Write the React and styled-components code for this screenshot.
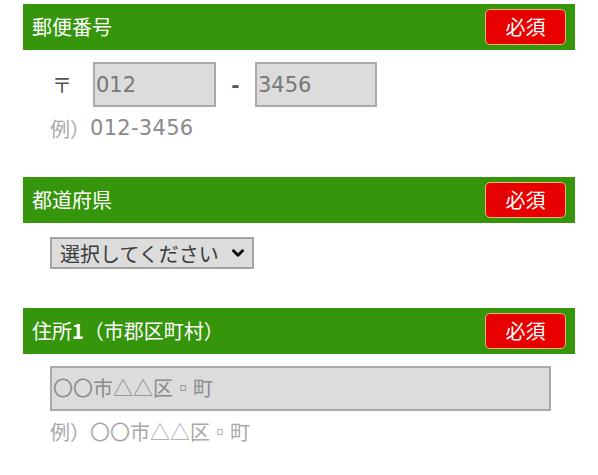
import React from "react";
import styled, { createGlobalStyle } from "styled-components";
import { ChevronDown } from "lucide-react";

/**
 * ______________________________
 * | 郵便番号            [必須] |
 * '''''''''''''''''''''''''''''''
 *    〒 [   ] - [   ]
 *    例）012-3456
 */

const GlobalStyle = createGlobalStyle`
  body {
    margin: 0;
    background: #ffffff;
    font-family: "Noto Sans CJK JP", "Noto Sans", sans-serif;
  }
`;

const Page = styled.div`
  padding: 4px 23px 0 23px;
  width: 552px;
`;

const Section = styled.section`
  margin-bottom: ${(p) => p.gap || 0}px;
`;

const Header = styled.div`
  height: 46px;
  display: flex;
  flex-direction: row;
  align-items: center;
  justify-content: space-between;
  padding: 0 9px;
  background: #35950b;
  box-sizing: border-box;
`;

const Title = styled.span`
  color: #ffffff;
  font-size: 20px;
  line-height: 1;
`;

const Num = styled.span`
  font-weight: 700;
`;

const Badge = styled.span`
  width: 81px;
  height: 36px;
  box-sizing: border-box;
  display: flex;
  align-items: center;
  justify-content: center;
  background: #e80000;
  border: 1px solid #e9b27a;
  border-radius: 5px;
  color: #ffffff;
  font-size: 20px;
  line-height: 1;
`;

const Body = styled.div`
  padding: ${(p) => p.top || 12}px 0 0 27px;
`;

const Row = styled.div`
  display: flex;
  flex-direction: row;
  align-items: center;
`;

const PostMark = styled.span`
  width: 41px;
  padding-left: 2px;
  font-size: 20px;
  color: #555555;
`;

const Dash = styled.span`
  width: 39px;
  text-align: center;
  font-family: "DejaVu Sans", sans-serif;
  font-size: 20px;
  font-weight: 700;
  color: #555555;
`;

const TextBox = styled.input`
  width: ${(p) => p.w}px;
  height: 45px;
  box-sizing: border-box;
  margin: 0;
  padding: 0 1px;
  background: #dcdcdc;
  border: 2px solid #a9a9a9;
  border-radius: 0;
  outline: none;
  font-family: "DejaVu Sans", "Noto Sans CJK JP", sans-serif;
  font-size: 21px;
  color: #777777;

  &::placeholder {
    font-family: "Noto Sans CJK JP", sans-serif;
    font-size: 20px;
    color: #8a8a8a;
    opacity: 1;
  }
`;

const Example = styled.div`
  margin-top: ${(p) => p.top || 6}px;
  height: 30px;
  display: flex;
  align-items: center;
  font-size: 20px;
  color: #a8a8a8;
`;

const ExampleValue = styled.span`
  font-family: "DejaVu Sans", sans-serif;
  font-size: 21px;
  letter-spacing: 0.3px;
  color: #8a8a8a;
`;

const SelectWrap = styled.div`
  position: relative;
  width: 204px;
  height: 32px;
`;

const Select = styled.select`
  appearance: none;
  width: 204px;
  height: 32px;
  box-sizing: border-box;
  margin: 0;
  padding: 0 0 0 8px;
  background: #dcdcdc;
  border: 2px solid #a3a3a3;
  border-radius: 0;
  font-family: "Noto Sans CJK JP", sans-serif;
  font-size: 20px;
  color: #3a3a3a;
`;

const Arrow = styled(ChevronDown)`
  position: absolute;
  right: 7px;
  top: 7px;
  pointer-events: none;
  color: #111111;
`;

const App = () => {
  return (
    <Page>
      <GlobalStyle />
      <Section gap={34}>
        <Header>
          <Title>郵便番号</Title>
          <Badge>必須</Badge>
        </Header>
        <Body>
          <Row>
            <PostMark>〒</PostMark>
            <TextBox w={123} defaultValue="012" />
            <Dash>-</Dash>
            <TextBox w={122} defaultValue="3456" />
          </Row>
          <Example>
            例）<ExampleValue>012-3456</ExampleValue>
          </Example>
        </Body>
      </Section>

      <Section gap={39}>
        <Header>
          <Title>都道府県</Title>
          <Badge>必須</Badge>
        </Header>
        <Body top={14}>
          <SelectWrap>
            <Select defaultValue="">
              <option value="">選択してください</option>
            </Select>
            <Arrow size={18} strokeWidth={4} />
          </SelectWrap>
        </Body>
      </Section>

      <Section>
        <Header>
          <Title>
            住所<Num>1</Num>（市郡区町村）
          </Title>
          <Badge>必須</Badge>
        </Header>
        <Body>
          <TextBox w={501} placeholder="〇〇市△△区▫町" />
          <Example top={5}>例）〇〇市△△区▫町</Example>
        </Body>
      </Section>
    </Page>
  );
};

export default App;
